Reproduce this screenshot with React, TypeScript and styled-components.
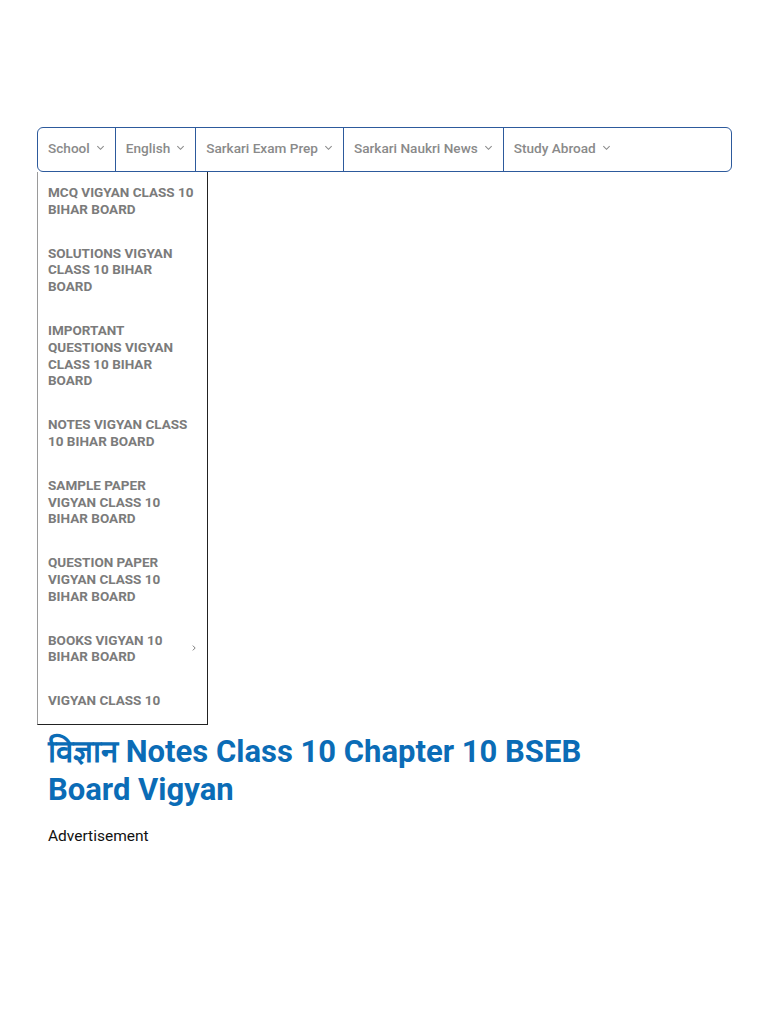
import React from 'react'
import styled, { createGlobalStyle } from 'styled-components'

const GlobalStyle = createGlobalStyle`
  body {
    margin: 0;
    background: #fff;
    font-family: Roboto, "Liberation Sans", Arial, sans-serif;
  }
`

const navItems = [
  'School',
  'English',
  'Sarkari Exam Prep',
  'Sarkari Naukri News',
  'Study Abroad',
]

const menuItems = [
  { label: 'MCQ VIGYAN CLASS 10 BIHAR BOARD' },
  { label: 'SOLUTIONS VIGYAN CLASS 10 BIHAR BOARD' },
  { label: 'IMPORTANT QUESTIONS VIGYAN CLASS 10 BIHAR BOARD' },
  { label: 'NOTES VIGYAN CLASS 10 BIHAR BOARD' },
  { label: 'SAMPLE PAPER VIGYAN CLASS 10 BIHAR BOARD' },
  { label: 'QUESTION PAPER VIGYAN CLASS 10 BIHAR BOARD' },
  { label: 'BOOKS VIGYAN 10 BIHAR BOARD', sub: true },
  { label: 'VIGYAN CLASS 10' },
]

const ChevronDown = () => (
  <svg width="9" height="9" viewBox="0 0 10 10" fill="none">
    <path d="M1.5 3.5 L5 7 L8.5 3.5" stroke="#8a8a8a" strokeWidth="1.2" />
  </svg>
)

const ChevronRight = () => (
  <SubIcon width="8" height="10" viewBox="0 0 10 10" fill="none">
    <path d="M3.5 2 L6.5 5 L3.5 8" stroke="#777" strokeWidth="1.2" />
  </SubIcon>
)

const App = (): JSX.Element => {
  return (
    <Page>
      <GlobalStyle />
      <Header>
        <NavBar>
          {navItems.map((item, i) => (
            <NavItem key={item} last={i === navItems.length - 1}>
              {item}
              <ChevronDown />
            </NavItem>
          ))}
        </NavBar>
        <Dropdown>
          {menuItems.map(item => (
            <MenuItem key={item.label}>
              <MenuLabel>{item.label}</MenuLabel>
              {item.sub ? <ChevronRight /> : null}
            </MenuItem>
          ))}
        </Dropdown>
      </Header>
      <Content>
        <Title>विज्ञान Notes Class 10 Chapter 10 BSEB Board Vigyan</Title>
        <AdLabel>Advertisement</AdLabel>
      </Content>
    </Page>
  )
}

const Page = styled.div`
  padding: 127px 36px 0 37px;
`

const Header = styled.div`
  display: flex;
  flex-direction: column;
  align-items: flex-start;
`

const NavBar = styled.nav`
  display: flex;
  align-self: stretch;
  height: 45px;
  box-sizing: border-box;
  border: 1px solid #2d5a9c;
  border-radius: 6px;
`

const NavItem = styled.div<{ last?: boolean }>`
  display: flex;
  align-items: center;
  gap: 6px;
  padding: 0 10px 4px 10px;
  border-right: ${({ last }) => (last ? 'none' : '1px solid #2d5a9c')};
  color: #8a8a8a;
  font-size: 13.6px;
  font-weight: 500;
  white-space: nowrap;
`

const Dropdown = styled.ul`
  margin: 0;
  padding: 0;
  list-style: none;
  width: 171px;
  box-sizing: border-box;
  border: 1px solid #222;
  border-top: none;
  border-left-color: #9a9a9a;
`

const MenuItem = styled.li`
  display: flex;
  align-items: center;
  justify-content: space-between;
  gap: 4px;
  padding: 12px 9px 15.3px 10px;
`

const MenuLabel = styled.span`
  color: #7b7b7b;
  font-size: 13.5px;
  font-weight: 700;
  line-height: 16.7px;
  max-width: 148px;
`

const SubIcon = styled.svg`
  flex-shrink: 0;
`

const Content = styled.div`
  padding: 8px 0 0 11px;
  width: 600px;
`

const Title = styled.h1`
  margin: 0;
  color: #0b6cb6;
  font-size: 31px;
  font-weight: 700;
  line-height: 38px;
`

const AdLabel = styled.div`
  margin-top: 18px;
  color: #111;
  font-size: 15.5px;
`

export default App
